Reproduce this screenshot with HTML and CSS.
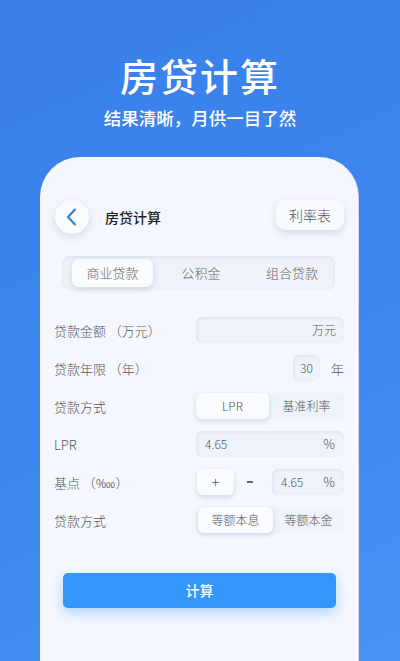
FILE: index.html
```html
<!DOCTYPE html>
<html lang="zh-CN">
<head>
    <meta charset="UTF-8">
    <meta name="viewport" content="width=device-width, initial-scale=1.0">
    <title>房贷计算</title>
    <link rel="stylesheet" href="styles.css">
</head>
<body>
    <div class="hero">
        <h1 class="hero-title">房贷计算</h1>
        <p class="hero-sub">结果清晰，月供一目了然</p>
    </div>

    <div class="phone">
        <div class="top-bar">
            <div class="back-btn">
                <svg width="34" height="34" viewBox="0 0 34 34">
                    <path d="M20 9.5 L13 17 L20 24.5" fill="none" stroke="#2f7be0" stroke-width="2" stroke-linecap="round" stroke-linejoin="round"/>
                </svg>
            </div>
            <div class="page-title">房贷计算</div>
            <div class="rate-btn">利率表</div>
        </div>

        <div class="tabs">
            <div class="tab tab-active">商业贷款</div>
            <div class="tab tab-mid">公积金</div>
            <div class="tab tab-last">组合贷款</div>
        </div>

        <div class="form">
            <div class="row">
                <div class="label">贷款金额 （万元）</div>
                <div class="field field-wide field-right">万元</div>
            </div>
            <div class="row">
                <div class="label">贷款年限 （年）</div>
                <div class="years">
                    <div class="field field-small">30</div>
                    <span class="unit">年</span>
                </div>
            </div>
            <div class="row">
                <div class="label">贷款方式</div>
                <div class="switch">
                    <div class="switch-item switch-on">LPR</div>
                    <div class="switch-item">基准利率</div>
                </div>
            </div>
            <div class="row">
                <div class="label">LPR</div>
                <div class="field field-wide field-split">
                    <span>4.65</span>
                    <span>%</span>
                </div>
            </div>
            <div class="row">
                <div class="label">基点 （‱）</div>
                <div class="points">
                    <div class="step-btn">+</div>
                    <div class="step-minus"><span class="minus-bar"></span></div>
                    <div class="field field-mid field-split">
                        <span>4.65</span>
                        <span>%</span>
                    </div>
                </div>
            </div>
            <div class="row">
                <div class="label">贷款方式</div>
                <div class="switch">
                    <div class="switch-item switch-on switch-on-2">等额本息</div>
                    <div class="switch-item">等额本金</div>
                </div>
            </div>
        </div>

        <div class="calc-btn">计算</div>
    </div>
</body>
</html>
```

FILE: styles.css
```css
html, body {
    margin: 0;
    padding: 0;
}
body {
    width: 400px;
    height: 661px;
    overflow: hidden;
    font-family: "Noto Sans CJK SC", "Noto Sans", sans-serif;
    background: linear-gradient(155deg, #3a7fea 0%, #3e86ef 55%, #4891f4 100%);
}
.hero {
    text-align: center;
    color: #fff;
    padding-top: 50px;
    height: 157px;
    box-sizing: border-box;
}
.hero-title {
    margin: 0;
    font-size: 38px;
    line-height: 50px;
    font-weight: 500;
    letter-spacing: 2px;
}
.hero-sub {
    margin: 0;
    margin-top: 6px;
    font-size: 17.5px;
    line-height: 24px;
    font-weight: 500;
}
.phone {
    margin-left: 40px;
    width: 319px;
    height: 504px;
    background-color: #f4f7fd;
    border-radius: 40px 40px 0 0;
    border-right: 1px solid #d5dbe6;
    padding: 43px 14px 0 15px;
    box-sizing: border-box;
}
.top-bar {
    display: flex;
    align-items: flex-start;
    height: 34px;
}
.back-btn {
    width: 34px;
    height: 34px;
    border-radius: 50%;
    background-color: #fafbff;
    box-shadow: 0 3px 8px rgba(150, 165, 200, 0.35);
}
.back-btn svg {
    display: block;
}
.page-title {
    margin-left: 16px;
    line-height: 34px;
    font-size: 14px;
    font-weight: 500;
    color: #1e1e1e;
}
.rate-btn {
    margin-left: auto;
    width: 68px;
    height: 30px;
    line-height: 30px;
    text-align: center;
    border-radius: 9px;
    background-color: #f9faff;
    box-shadow: 0 3px 7px rgba(150, 165, 200, 0.35);
    font-size: 14px;
    font-weight: 300;
    color: #555;
}
.tabs {
    display: flex;
    margin: 22px 9px 0 7px;
    height: 34px;
    padding: 3px 0 3px 10px;
    box-sizing: border-box;
    border-radius: 8px;
    background-color: #eef2f9;
    box-shadow: inset 0 1px 3px rgba(160, 175, 205, 0.25);
}
.tab {
    line-height: 28px;
    text-align: center;
    font-size: 13px;
    font-weight: 300;
    color: #666;
}
.tab-active {
    width: 81px;
    border-radius: 7px;
    background-color: #fafbff;
    box-shadow: 0 2px 6px rgba(150, 165, 200, 0.4);
}
.tab-mid {
    width: 96px;
}
.tab-last {
    width: 86px;
}
.form {
    margin-top: 27px;
    display: flex;
    flex-direction: column;
    gap: 12px;
}
.row {
    display: flex;
    align-items: center;
    height: 26px;
}
.label {
    margin-left: -1px;
    font-size: 13px;
    font-weight: 300;
    color: #555;
}
.field {
    height: 26px;
    line-height: 26px;
    border-radius: 6px;
    background-color: #eef2fa;
    box-shadow: inset 1px 1px 3px rgba(165, 178, 208, 0.25);
    font-size: 12px;
    font-weight: 300;
    color: #555;
    box-sizing: border-box;
}
.field-wide {
    margin-left: auto;
    width: 148px;
}
.field-right {
    text-align: right;
    padding-right: 8px;
}
.field-split {
    display: flex;
    justify-content: space-between;
    padding: 0 9px 0 9px;
}
.field-split span:last-child {
    font-size: 13px;
}
.years {
    margin-left: auto;
    display: flex;
    align-items: center;
}
.field-small {
    width: 27px;
    text-align: center;
}
.unit {
    margin-left: 11px;
    font-size: 13px;
    font-weight: 300;
    color: #555;
}
.switch {
    margin-left: auto;
    width: 148px;
    height: 26px;
    display: flex;
    border-radius: 6px;
    background-color: #eef2fa;
}
.switch-item {
    flex: 1;
    line-height: 26px;
    text-align: center;
    font-size: 12px;
    font-weight: 300;
    color: #555;
}
.switch-on {
    flex: none;
    width: 73px;
    border-radius: 6px;
    background-color: #fafbff;
    box-shadow: 0 2px 5px rgba(150, 165, 200, 0.4);
}
.switch-on-2 {
    margin-left: 2px;
    width: 75px;
}
.points {
    margin-left: auto;
    display: flex;
    align-items: center;
}
.step-btn {
    width: 37px;
    height: 26px;
    line-height: 26px;
    text-align: center;
    border-radius: 6px;
    background-color: #fafbff;
    box-shadow: 0 2px 5px rgba(150, 165, 200, 0.4);
    font-size: 15px;
    font-weight: 300;
    color: #555;
}
.step-minus {
    width: 31px;
    display: flex;
    justify-content: center;
}
.minus-bar {
    width: 6px;
    height: 2px;
    background-color: #666;
}
.field-mid {
    margin-left: 7px;
    width: 72px;
}
.calc-btn {
    margin: 40px 8px 0 8px;
    height: 35px;
    line-height: 35px;
    text-align: center;
    border-radius: 5px;
    background-color: #3396fa;
    box-shadow: 0 5px 12px rgba(51, 150, 250, 0.35);
    font-size: 14px;
    font-weight: 500;
    color: #fff;
}
```
